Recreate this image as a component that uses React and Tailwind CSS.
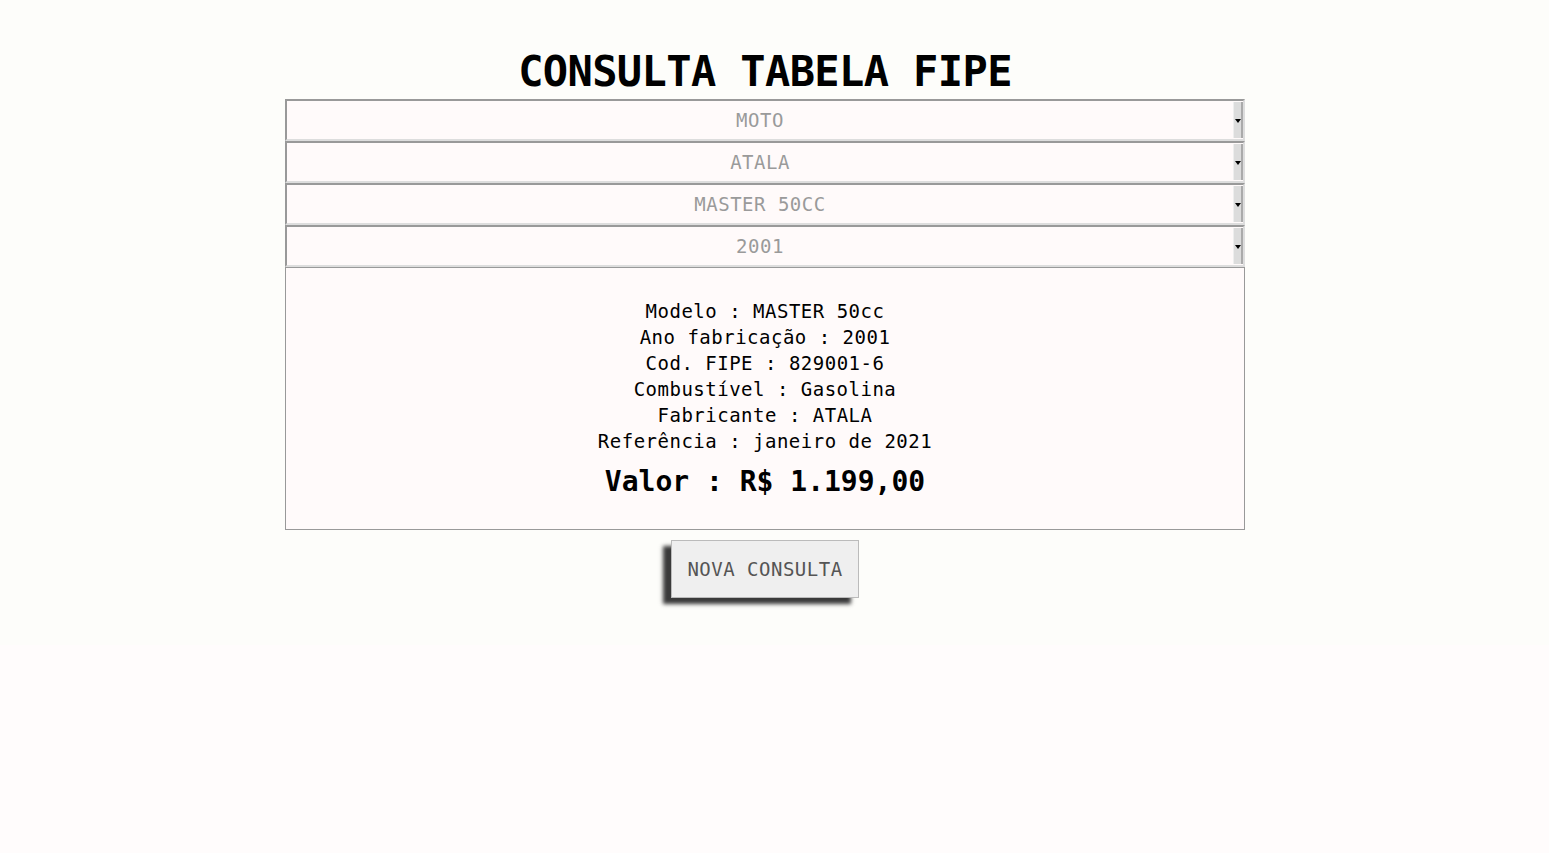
import React from 'react';

const mono = { fontFamily: '"DejaVu Sans Mono", "Liberation Mono", monospace' };

function Select({ value }) {
  return (
    <div className="flex h-[42px] w-full border-2 border-[#999] border-b-[#ddd] border-r-[#ddd] bg-[#fffafa]">
      <div className="flex flex-1 items-center justify-center text-[19px] tracking-[0.5px] text-[#9a9a9a] uppercase">
        {value}
      </div>
      <div className="my-[1px] flex w-[10px] items-center justify-center border-l border-l-[#eee] border-r-2 border-r-[#aaa] bg-[#dcdcdc]">
        <div className="mt-[2px] h-0 w-0 border-x-[3px] border-t-[4px] border-x-transparent border-t-black" />
      </div>
    </div>
  );
}

export default function App() {
  const rows = [
    'Modelo : MASTER 50cc',
    'Ano fabricação : 2001',
    'Cod. FIPE : 829001-6',
    'Combustível : Gasolina',
    'Fabricante : ATALA',
    'Referência : janeiro de 2021',
  ];

  return (
    <div className="min-h-screen bg-[#fffcfc]" style={mono}>
      <div className="h-[645px] bg-[#fdfdfa] pt-[45px]">
        <div className="w-[1530px]">
          <div className="mx-auto w-[960px]">
            <h1 className="text-center text-[42px] leading-[54px] font-bold tracking-[-0.6px] text-black">
              CONSULTA TABELA FIPE
            </h1>

            <div className="flex flex-col">
              <Select value="Moto" />
              <Select value="Atala" />
              <Select value="Master 50cc" />
              <Select value="2001" />
            </div>

            <div className="flex h-[263px] flex-col items-center border border-[#999] bg-[#fffafa] pt-[30px] text-black">
              {rows.map((r) => (
                <div key={r} className="text-[19px] leading-[26px] tracking-[0.5px]">
                  {r}
                </div>
              ))}
              <div className="mt-[10px] text-[28px] leading-[36px] font-bold">
                Valor : R$ 1.199,00
              </div>
            </div>

            <div className="mt-[10px] flex justify-center">
              <button className="h-[58px] w-[188px] border border-[#bbb] bg-[#efefef] text-[19px] tracking-[0.5px] text-[#555] shadow-[-8px_6px_4px_#3a3a3a]">
                NOVA CONSULTA
              </button>
            </div>
          </div>
        </div>
      </div>
    </div>
  );
}
